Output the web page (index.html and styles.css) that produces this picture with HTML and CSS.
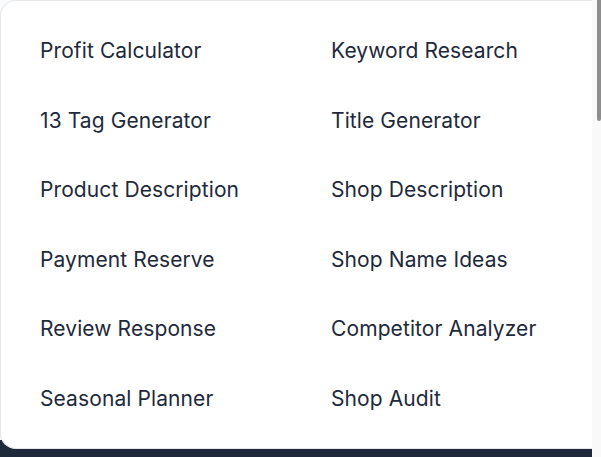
FILE: index.html
```html
<!DOCTYPE html>
<html>
	<head>
		<meta charset="UTF-8">
		<title>Tools</title>
		<link rel="stylesheet" href="styles.css">
	</head>
	<body>
		<div class="page">
			<div class="main">
				<div class="menu">
					<a class="item" href="#">Profit Calculator</a>
					<a class="item" href="#">Keyword Research</a>
					<a class="item" href="#">13 Tag Generator</a>
					<a class="item" href="#">Title Generator</a>
					<a class="item" href="#">Product Description</a>
					<a class="item" href="#">Shop Description</a>
					<a class="item" href="#">Payment Reserve</a>
					<a class="item" href="#">Shop Name Ideas</a>
					<a class="item" href="#">Review Response</a>
					<a class="item" href="#">Competitor Analyzer</a>
					<a class="item" href="#">Seasonal Planner</a>
					<a class="item" href="#">Shop Audit</a>
				</div>
			</div>
			<div class="scrollbar">
				<div class="thumb"></div>
			</div>
		</div>
	</body>
</html>
```

FILE: styles.css
```css
html,
body {
	margin: 0;
	padding: 0;
}

body {
	font-family: Inter, "Noto Sans", sans-serif;
	color: #1e293b;
}

.page {
	display: flex;
	height: 457px;
	overflow: hidden;
}

.main {
	width: 592px;
	height: 457px;
	background: linear-gradient(to bottom, #f8fafc 440px, #1e293b 440px);
}

.menu {
	box-sizing: border-box;
	height: 449px;
	padding: 36px 0 0 39px;
	background-color: #fff;
	border: 1px solid #e5e7eb;
	border-right: none;
	border-radius: 16px 0 0 16px;
	display: grid;
	grid-template-columns: 291px 1fr;
	grid-auto-rows: 69.6px;
	align-content: start;
}

.item {
	font-size: 21px;
	font-weight: 400;
	letter-spacing: 0.1px;
	line-height: 28px;
	color: #1e293b;
	text-decoration: none;
	white-space: nowrap;
}

.scrollbar {
	width: 9px;
	height: 457px;
	background-color: #f9f9f9;
}

.thumb {
	margin-left: 5px;
	width: 4px;
	height: 121px;
	background-color: #8d8d8d;
	border-radius: 0 0 2px 2px;
}
```
